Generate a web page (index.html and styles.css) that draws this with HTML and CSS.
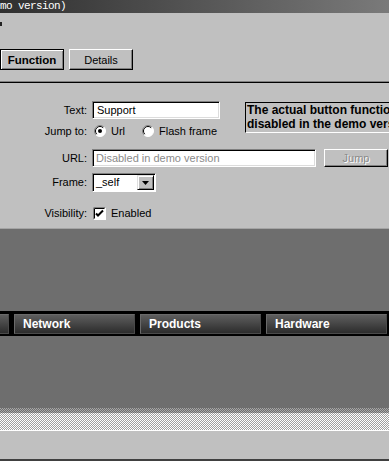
FILE: index.html
```html
<!DOCTYPE html>
<html>
<head>
<meta charset="utf-8">
<link rel="stylesheet" href="styles.css">
</head>
<body>
<div class="titlebar"><span class="title">(demo version)</span></div>
<div class="toolbar">
  <div class="mark"></div>
  <div class="tabs">
    <button class="tab active">Function</button>
    <button class="tab">Details</button>
  </div>
</div>
<div class="sep"></div>
<div class="form">
  <div class="lbl r1">Text:</div>
  <div class="ctl r1"><div class="field text-field">Support</div></div>
  <div class="info">The actual button functions are<br>disabled in the demo version.</div>

  <div class="lbl r2">Jump to:</div>
  <div class="ctl r2 radios">
    <span class="opt"><svg class="radio" width="12" height="12" viewBox="0 0 12 12"><circle cx="6" cy="6" r="5.5" fill="#fff"/><path d="M2.1 9.9A5.5 5.5 0 0 1 9.9 2.1" stroke="#808080" fill="none"/><path d="M2.8 9.2A4.5 4.5 0 0 1 9.2 2.8" stroke="#000" fill="none"/><path d="M9.9 2.1A5.5 5.5 0 0 1 2.1 9.9" stroke="#fff" fill="none"/><circle cx="6" cy="6" r="2" fill="#000"/></svg>Url</span>
    <span class="opt"><svg class="radio" width="12" height="12" viewBox="0 0 12 12"><circle cx="6" cy="6" r="5.5" fill="#fff"/><path d="M2.1 9.9A5.5 5.5 0 0 1 9.9 2.1" stroke="#808080" fill="none"/><path d="M2.8 9.2A4.5 4.5 0 0 1 9.2 2.8" stroke="#000" fill="none"/><path d="M9.9 2.1A5.5 5.5 0 0 1 2.1 9.9" stroke="#fff" fill="none"/></svg>Flash frame</span>
  </div>

  <div class="lbl r3">URL:</div>
  <div class="ctl r3 url-row">
    <div class="field url-field">Disabled in demo version</div>
    <div class="jump">Jump</div>
  </div>

  <div class="lbl r4">Frame:</div>
  <div class="ctl r4">
    <div class="select"><span class="sel-text">_self</span><span class="sel-btn"><svg width="7" height="4" viewBox="0 0 7 4"><path d="M0 0H7L3.5 4Z" fill="#000"/></svg></span></div>
  </div>

  <div class="lbl r5">Visibility:</div>
  <div class="ctl r5 check">
    <svg class="cbox" width="13" height="13" viewBox="0 0 13 13"><rect x="0" y="0" width="13" height="13" fill="#fff"/><path d="M0.5 12.5V0.5H12.5" stroke="#808080" fill="none"/><path d="M1.5 11.5V1.5H11.5" stroke="#000" fill="none"/><path d="M3 6.5L5 8.5L10 3.5" stroke="#000" stroke-width="2" fill="none"/></svg>Enabled
  </div>
</div>
<div class="stage">
  <div class="nav">
    <div class="nav-track">
      <div class="nav-btn">Home</div>
      <div class="nav-btn">Network</div>
      <div class="nav-btn">Products</div>
      <div class="nav-btn">Hardware</div>
    </div>
  </div>
</div>
<div class="dither"></div>
<div class="checker"></div>
<div class="hl"></div>
<div class="statusbar"></div>
<div class="bottom-line"></div>
</body>
</html>
```
FILE: styles.css
```css
html, body {
  margin: 0;
  overflow: hidden;
  background: #c0c0c0;
}
body {
  width: 389px;
  height: 461px;
  font-family: "Liberation Sans", Arial, sans-serif;
  color: #000;
}
.titlebar {
  height: 13px;
  background: linear-gradient(to right, #2f2f2f, #7a7a7a);
  overflow: hidden;
  white-space: nowrap;
}
.title {
  display: block;
  margin-left: -18px;
  font: 11px/12px "Liberation Mono", monospace;
  letter-spacing: -0.6px;
  color: #fff;
}
.toolbar {
  height: 68px;
  display: flex;
  flex-direction: column;
}
.mark {
  width: 2px;
  height: 4px;
  background: #222;
  margin-top: 9px;
}
.tabs {
  display: flex;
  gap: 5px;
  margin-top: 23px;
}
.tab {
  width: 64px;
  height: 21px;
  padding: 0;
  font: 11px "Liberation Sans", Arial, sans-serif;
  color: #000;
  background: #c0c0c0;
  border: 1px solid;
  border-color: #fff #000 #000 #fff;
  box-shadow: inset -1px -1px #808080;
}
.tab.active {
  font-weight: bold;
  font-size: 11.5px;
  border-color: #000;
  box-shadow: inset 1px 1px #fff, inset -1px -1px #808080;
}
.sep {
  height: 1px;
  border-top: 1px solid #808080;
  background: #000;
}
.form {
  height: 146px;
  box-sizing: border-box;
  padding-top: 18px;
  display: grid;
  grid-template-columns: 92px 153px 1fr;
  grid-template-rows: 18px 30px 18px 37px 25px;
  font-size: 11px;
  border-bottom: 1px solid #a4a4a4;
}
.lbl {
  text-align: right;
  padding-right: 5px;
  grid-column: 1;
}
.ctl { grid-column: 2; }
.r1 { line-height: 18px; height: 18px; }
.r2 { margin-top: 6px; line-height: 12px; height: 12px; }
.r3 { line-height: 18px; height: 18px; }
.r4 { margin-top: 6px; line-height: 19px; height: 19px; }
.r5 { margin-top: 3px; line-height: 13px; height: 13px; }

.field {
  box-sizing: border-box;
  height: 18px;
  background: #fff;
  border: 1px solid;
  border-color: #808080 #fff #fff #808080;
  box-shadow: inset 1px 1px #000, inset -1px -1px #dcdcdc;
  padding-left: 4px;
  line-height: 16px;
  white-space: nowrap;
  overflow: hidden;
}
.text-field { width: 128px; }
.info {
  grid-column: 3;
  grid-row: 1 / 3;
  align-self: start;
  margin-top: 1px;
  width: 200px;
  height: 31px;
  box-sizing: border-box;
  border: 1px solid;
  border-color: #000 #fff #fff #000;
  padding: 0 0 0 1px;
  font: bold 12px/14px "Liberation Sans", Arial, sans-serif;
  white-space: nowrap;
}
.radios {
  display: flex;
  gap: 17px;
  padding-left: 2px;
}
.opt {
  display: flex;
  align-items: center;
  gap: 5px;
}
.radio { flex: none; }
.url-row {
  grid-column: 2 / 4;
  display: flex;
  gap: 8px;
}
.url-field {
  width: 224px;
  color: #8a8a8a;
  padding-left: 3px;
}
.jump {
  box-sizing: border-box;
  width: 64px;
  height: 18px;
  text-align: center;
  line-height: 16px;
  color: #8a8a8a;
  text-shadow: 1px 1px #fff;
  background: #c0c0c0;
  border: 1px solid;
  border-color: #fff #000 #000 #fff;
  box-shadow: inset -1px -1px #808080;
}
.select {
  box-sizing: border-box;
  width: 64px;
  height: 19px;
  display: flex;
  background: #fff;
  border: 1px solid;
  border-color: #808080 #fff #fff #808080;
  box-shadow: inset 1px 1px #000;
  padding: 1px;
}
.sel-text {
  flex: 1;
  padding-left: 2px;
  line-height: 15px;
}
.sel-btn {
  box-sizing: border-box;
  width: 17px;
  height: 15px;
  background: #c0c0c0;
  border: 1px solid;
  border-color: #dfdfdf #000 #000 #dfdfdf;
  box-shadow: inset 1px 1px #fff, inset -1px -1px #808080;
  display: flex;
  align-items: center;
  justify-content: center;
}
.check {
  display: flex;
  align-items: center;
  gap: 5px;
  padding-left: 1px;
}
.cbox { flex: none; }

.stage {
  height: 179px;
  box-sizing: border-box;
  padding-top: 82px;
  background: #6e6e6e;
}
.nav {
  height: 25px;
  box-sizing: border-box;
  padding-top: 3px;
  background: #000;
  overflow: hidden;
}
.nav-track {
  display: flex;
  gap: 5px;
  margin-left: -112px;
}
.nav-btn {
  flex: none;
  box-sizing: border-box;
  width: 121px;
  height: 20px;
  padding-left: 8px;
  border: 1px solid;
  border-color: #6a6a6a #4a4a4a #4a4a4a #6a6a6a;
  background: linear-gradient(#5e5e5e, #2c2c2c);
  color: #fff;
  font: bold 12px/18px "Liberation Sans", Arial, sans-serif;
}
.dither {
  height: 5px;
  background: repeating-conic-gradient(#6e6e6e 0 25%, #a8a8a8 0 50%) 0 0 / 2px 2px;
}
.checker {
  height: 17px;
  background: repeating-conic-gradient(#fff 0 25%, #a0a0a0 0 50%) 0 0 / 2px 2px;
}
.hl {
  height: 1px;
  background: #fff;
}
.statusbar {
  height: 28px;
  background: #c0c0c0;
}
.bottom-line {
  height: 2px;
  background: #404040;
}
```
